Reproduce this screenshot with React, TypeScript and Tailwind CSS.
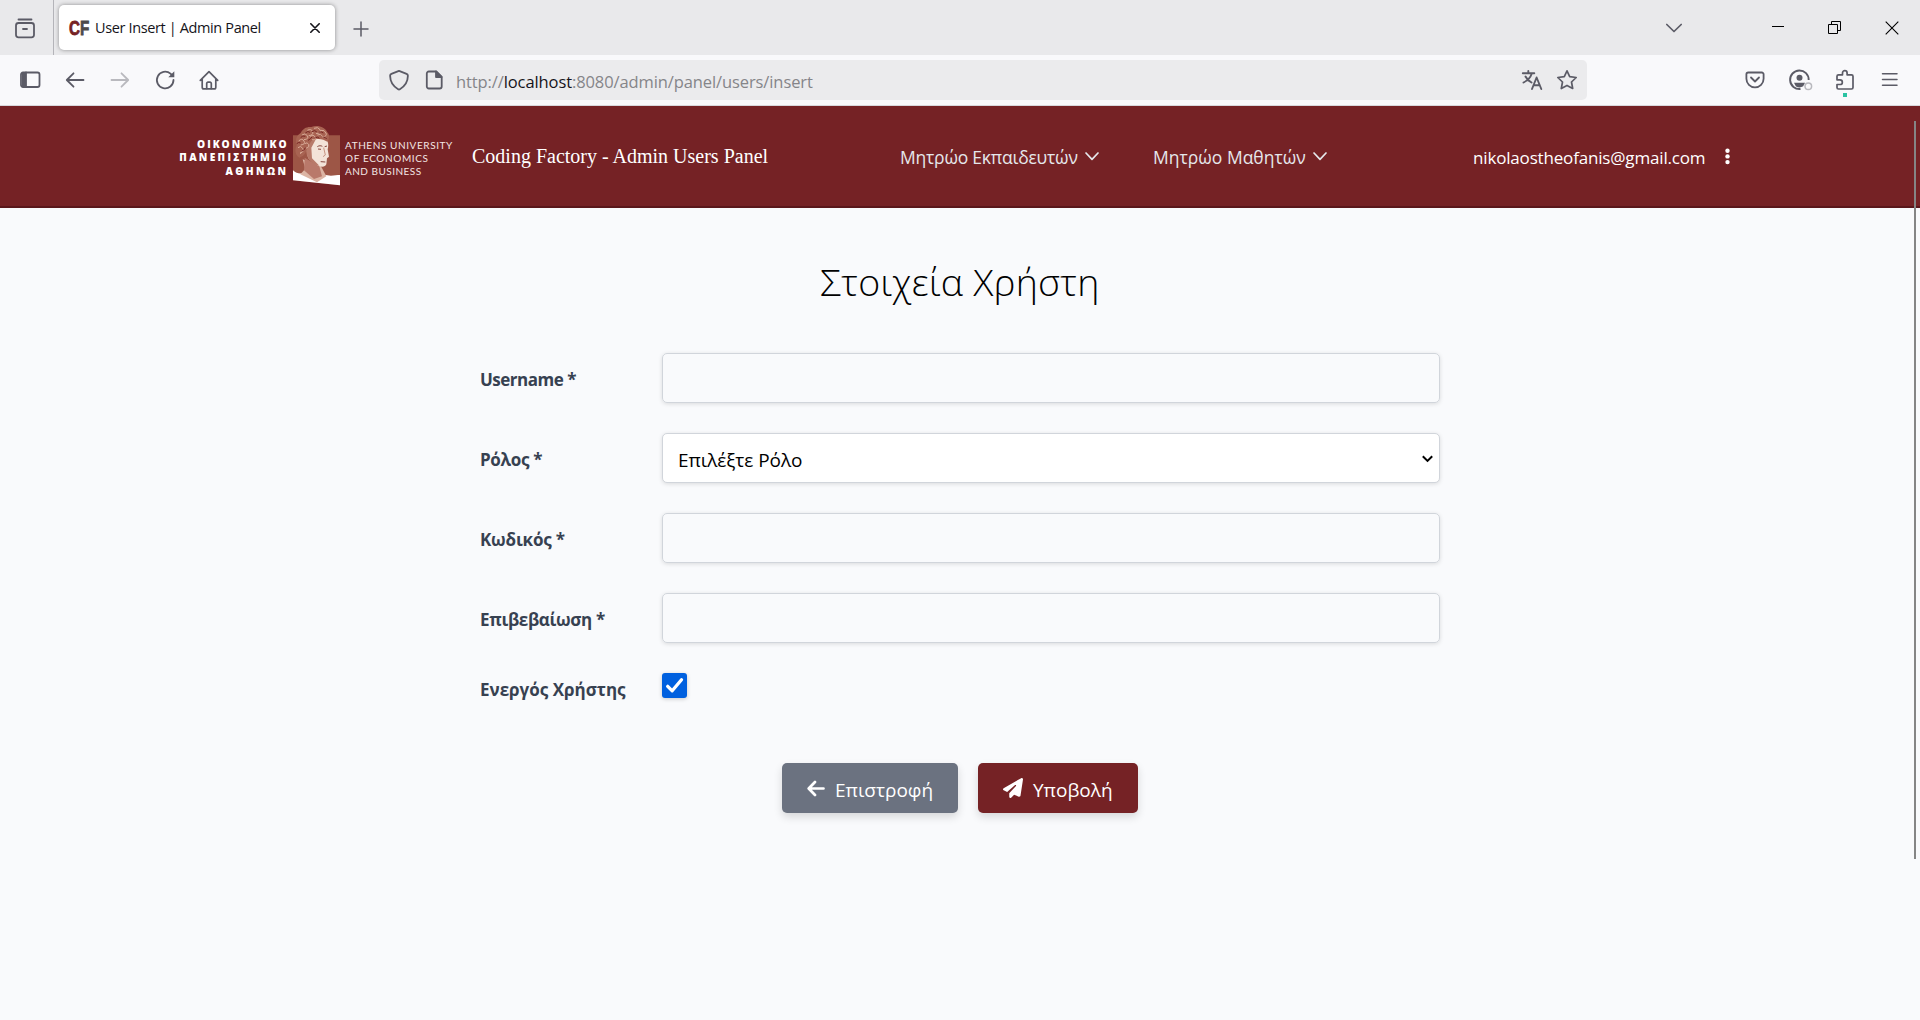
import type { ReactNode } from 'react';

function Icon({ size = 24, w = 1.6, children }: { size?: number; w?: number; children: ReactNode }) {
  return (
    <svg
      width={size}
      height={size}
      viewBox={`0 0 ${size} ${size}`}
      fill="none"
      stroke="currentColor"
      strokeWidth={w}
      strokeLinecap="round"
      strokeLinejoin="round"
      className="shrink-0"
    >
      {children}
    </svg>
  );
}

function Slot({ className, children }: { className: string; children: ReactNode }) {
  return <div className={`flex h-full shrink-0 items-center justify-center ${className}`}>{children}</div>;
}

function TabStrip() {
  return (
    <div className="flex h-[55px] items-center bg-[#e9e9eb] text-[#5b5b66]">
      <div className="flex h-full w-[54px] shrink-0 items-center border-r border-[#b4b4b9] pt-[2px] pl-[13px]">
        <Icon w={1.8}>
          <path d="M5.5 2.5h13" />
          <rect x="3" y="6" width="18" height="14.3" rx="2.5" />
          <path d="M10 12h4" />
        </Icon>
      </div>
      <div className="ml-[5px] flex h-[45px] w-[276px] shrink-0 items-center rounded-[5px] bg-white pl-[10px] shadow-[0_0_4px_rgba(0,0,0,0.4)]">
        <div className="flex h-5 w-[26px] shrink-0 items-center">
          <span className="origin-left scale-x-[0.76] font-['Liberation_Sans',sans-serif] text-[20px] leading-none font-bold text-[#752225] [-webkit-text-stroke:0.8px]">
            C<span className="text-[#4d4a4b]">F</span>
          </span>
        </div>
        <span className="w-[215px] pt-[1px] text-[14.5px] tracking-[-0.37px] whitespace-nowrap text-[#15141a]">
          User Insert | Admin Panel
        </span>
        <svg width="10" height="10" viewBox="0 0 10 10" stroke="#15141a" strokeWidth="1.6" strokeLinecap="round">
          <path d="M.8.8l8.4 8.4M9.2.8L.8 9.2" />
        </svg>
      </div>
      <Slot className="ml-[12px] w-[28px] pt-[2px]">
        <Icon size={18} w={1.5}>
          <path d="M9 2v14M2 9h14" />
        </Icon>
      </Slot>
      <div className="flex-1" />
      <Slot className="w-[75px]">
        <Icon w={1.7}>
          <path d="M4.8 8.5l7.2 7 7.2-7" />
        </Icon>
      </Slot>
      <div className="ml-[38px] flex h-full text-black">
        <Slot className="w-[57px]">
          <svg width="12" height="2" viewBox="0 0 12 2" fill="currentColor" className="mb-[1px]">
            <path d="M0 0h12v1H0z" />
          </svg>
        </Slot>
        <Slot className="w-[57px]">
          <svg width="13" height="13" viewBox="0 0 13 13" fill="none" stroke="currentColor">
            <path d="M.5 3.5h9v9h-9zM3.5 3.5v-3h9v9h-3" />
          </svg>
        </Slot>
        <Slot className="w-[57px]">
          <svg width="14" height="14" viewBox="0 0 14 14" fill="none" stroke="currentColor" strokeWidth="1.1">
            <path d="M.7.7l12.6 12.6M13.3.7L.7 13.3" />
          </svg>
        </Slot>
      </div>
    </div>
  );
}

function Toolbar() {
  return (
    <div className="flex h-[51px] items-center border-b border-[#d8d8dc] bg-[#f9f9fb] text-[#5b5b66]">
      <div className="ml-[7px] flex h-full w-[372px] shrink-0">
        <Slot className="w-[45px]">
          <Icon w={1.8}>
            <rect x="3" y="4.5" width="18.5" height="14.5" rx="2" />
            <path d="M4 5h4v13.5h-4z" fill="currentColor" stroke="none" />
            <path d="M8 4.5v14.5" />
          </Icon>
        </Slot>
        <Slot className="w-[45px]">
          <Icon w={1.8}>
            <path d="M20.5 12H4M10.5 5.3L3.8 12l6.7 6.7" />
          </Icon>
        </Slot>
        <Slot className="w-[45px] text-[#b9b9be]">
          <Icon w={1.8}>
            <path d="M3.5 12H20M13.5 5.3l6.7 6.7-6.7 6.7" />
          </Icon>
        </Slot>
        <Slot className="w-[45px]">
          <Icon w={1.8}>
            <path d="M20.5 12a8.3 8.3 0 1 1-3-6.400l1.500 1.600" />
            <path d="M21.300 3.300v6h-6z" fill="currentColor" stroke="none" />
          </Icon>
        </Slot>
        <Slot className="w-[44px]">
          <Icon w={1.7}>
            <path d="M3.3 12.3L12 3.6l8.7 8.7M5.2 10.8v8.4a1.7 1.7 0 0 0 1.7 1.7h10.2a1.7 1.7 0 0 0 1.7-1.7v-8.4" />
            <path d="M9.7 20.5v-5a1.3 1.3 0 0 1 1.3-1.3h2a1.3 1.3 0 0 1 1.3 1.3v5" />
          </Icon>
        </Slot>
      </div>
      <div className="flex h-10 w-[1208px] shrink-0 items-center rounded-[5px] bg-[#ebebed]">
        <Slot className="ml-[4px] w-[32px]">
          <Icon w={1.8}>
            <path d="M12 2.8l7.6 3.1c.9.4 1.3 1 1.3 1.900-.1 5.8-3.5 10.800-8 13.400a1.700 1.700 0 0 1-1.800 0c-4.500-2.600-7.900-7.600-8-13.400 0-.9.4-1.500 1.300-1.900z" />
          </Icon>
        </Slot>
        <Slot className="ml-[3px] w-[32px]">
          <Icon w={1.8}>
            <path d="M6.8 3.5h7.4l5.5 5.5v9.500a2 2 0 0 1-2 2H6.800a2 2 0 0 1-2-2v-13a2 2 0 0 1 2-2z" />
            <path d="M14 3.5v5.5h5.5z" fill="currentColor" />
          </Icon>
        </Slot>
        <span className="ml-[6px] flex-1 pt-[4px] text-[16.5px] tracking-[-0.1px] whitespace-nowrap text-[#858589]">
          http://<span className="text-[#15141a]">localhost</span>:8080/admin/panel/users/insert
        </span>
        <Slot className="w-[35px]">
          <Icon w={1.9}>
            <path d="M2.8 5.2h11.5M8.3 3v2M11.8 5.5c-1.300 4-4.500 7.200-8.300 9M5.500 8.500c1.300 2.700 3.300 4.500 6 6M12 21l4.600-11.500L21.300 21M13.500 17.300h6.300" />
          </Icon>
        </Slot>
        <Slot className="mr-[2px] w-[36px]">
          <Icon w={1.7}>
            <path d="M12 2.8l2.700 5.900 6.500.8-4.700 4.500 1.200 6.500L12 17.400l-5.700 3.100L7.500 14 2.800 9.500l6.500-.8z" />
          </Icon>
        </Slot>
      </div>
      <div className="ml-[145px] flex h-full">
        <Slot className="w-[46px]">
          <Icon w={1.8}>
            <path d="M5.2 4.5h13.600a1.800 1.800 0 0 1 1.800 1.800v4.500a8.600 8.600 0 0 1-17.200 0V6.300a1.800 1.800 0 0 1 1.800-1.800z" />
            <path d="M8 9.5l4 4 4-4" />
          </Icon>
        </Slot>
        <Slot className="w-[44px]">
          <svg width="26" height="24" viewBox="0 0 26 24" fill="none">
            <path d="M13.5 21a9.300 9.300 0 1 1 8.200-9" stroke="currentColor" strokeWidth="1.9" />
            <circle cx="12.5" cy="9.7" r="3" fill="currentColor" />
            <path d="M7 14.8h11l-1.800 3.500c-2 1.500-5.500 1.500-7.400 0z" fill="currentColor" />
            <circle cx="21.3" cy="18.3" r="3.3" stroke="#b9b9be" strokeWidth="1.5" />
          </svg>
        </Slot>
        <Slot className="relative w-[45px]">
          <Icon w={1.7}>
            <path d="M4 9V8.300a1.500 1.500 0 0 1 1.500-1.500h4V5a2.300 2.300 0 0 1 4.600 0v1.800h4.400A1.500 1.500 0 0 1 20 8.300v11.200a1.500 1.500 0 0 1-1.500 1.500h-13A1.500 1.500 0 0 1 4 19.500v-3h3a2.300 2.300 0 0 0 0-4.700H4z" />
          </Icon>
          <span className="absolute top-[38px] left-[21px] h-1 w-1 bg-[#2ac3a2]" />
        </Slot>
        <Slot className="w-[45px]">
          <Icon w={1.5}>
            <path d="M4.5 5.800h14.500M4.500 11.500h14.500M4.500 17.200h14.500" />
          </Icon>
        </Slot>
      </div>
    </div>
  );
}

function Portrait() {
  return (
    <svg width="47" height="61" viewBox="369 62 141 183" className="shrink-0">
      <path d="M369 93h141v150l-141-15z" fill="#9d5646" />
      <path d="M369 198c10 10 22 11 32 8l20-8 40 12c20 8 35 2 49 2v31l-141-15z" fill="#fff" />
      <path d="M398 165l8 28-15 17 50 24 28-18-16-30z" fill="#dcb5a4" />
      <path d="M404 160l-2 38 30 26 24-8-8-30z" fill="#b9796a" />
      <path d="M416 112c16-14 44-16 56-2 4 8 3 18 1 25l4 22-6 5-2 18c-3 8-14 9-24 4l-28-20c-8-14-9-38-1-52z" fill="#f3e3d8" />
      <path d="M408 112c8-8 18-10 30-8l-14 26 2 32 22 22c-16-2-32-14-38-34z" fill="#b87a69" />
      <path d="M442 127c6-4 11-3 15-1M464 127l7-2M452 172l14 1M444 134l9 1" stroke="#86453c" strokeWidth="3" fill="none" />
      <path d="M461 130l5 22-7 5" stroke="#c89583" strokeWidth="3" fill="none" />
      <path
        d="M388 160c-14-8-14-28-8-36-6-16 0-32 12-38 6-14 20-20 32-18 18-8 42 0 48 16 8 8 6 20 0 28-12-8-28-12-44-4-10 6-10 18-18 26-2 12-8 22-22 26z"
        fill="#a86352"
      />
      <path
        d="M384 130q8-8 14 2t-8 14M386 110q10-10 16 0t-10 12M396 92q10-8 16 2t-10 12M412 78q12-6 16 4t-12 12M432 72q12-6 18 4t-12 12M452 78q12-2 16 8t-10 12M420 96q10-8 16 2t-10 8M442 92q10-6 16 4M404 118q8-6 12 2t-8 12M390 148q8-4 12-12"
        stroke="#d9ab98"
        strokeWidth="3"
        fill="none"
      />
      <path
        d="M380 118q6-6 12-2M392 100q6-8 14-4M406 86q8-8 14-2M426 82q8-6 14 0M446 84q8-4 14 2M414 108q8-4 12-10M436 100q8-4 12 2M396 140q8-2 10-10M460 98q6 0 10 6"
        stroke="#762522"
        strokeWidth="3"
        fill="none"
      />
    </svg>
  );
}

function Logo() {
  return (
    <div className="flex w-[276px] shrink-0 items-center">
      <div className="flex w-[108px] flex-col items-end pt-[4px] text-[10.2px] leading-[13.6px] font-extrabold whitespace-nowrap text-white">
        <span className="-mr-[0.5px] tracking-[1.95px]">ΟΙΚΟΝΟΜΙΚΟ</span>
        <span className="-mr-[0.5px] tracking-[2.3px]">ΠΑΝΕΠΙΣΤΗΜΙΟ</span>
        <span className="-mr-[0.5px] tracking-[2.45px]">ΑΘΗΝΩΝ</span>
      </div>
      <div className="mr-[5px] mb-[2px] ml-[5px]">
        <Portrait />
      </div>
      <div className="flex flex-col pt-[5px] font-['Lato',sans-serif] text-[10px] leading-[13.2px] whitespace-nowrap text-[#f3e6e4]">
        <span className="tracking-[0.58px]">ATHENS UNIVERSITY</span>
        <span className="tracking-[0.64px]">OF ECONOMICS</span>
        <span className="tracking-[0.48px]">AND BUSINESS</span>
      </div>
    </div>
  );
}

function NavChevron() {
  return (
    <svg
      width="14"
      height="9"
      viewBox="0 0 14 9"
      fill="none"
      stroke="currentColor"
      strokeWidth="1.7"
      strokeLinecap="round"
      strokeLinejoin="round"
      className="mb-[2px] shrink-0"
    >
      <path d="M1 1l6 6.3L13 1" />
    </svg>
  );
}

function Navbar() {
  return (
    <nav className="flex h-[102px] items-center border-b-2 border-[#5a171b] bg-[#752225] pl-[180px] text-white">
      <Logo />
      <span className="ml-[16px] w-[428px] shrink-0 pb-[1px] font-['Liberation_Serif',serif] text-[20px] whitespace-nowrap">
        Coding Factory - Admin Users Panel
      </span>
      <div className="flex w-[253px] shrink-0 items-center pt-[2px] text-[17.5px] text-[#e5e7eb]">
        <span className="w-[185px] tracking-[-0.22px] whitespace-nowrap">Μητρώο Εκπαιδευτών</span>
        <NavChevron />
      </div>
      <div className="flex w-[320px] shrink-0 items-center pt-[2px] text-[17.5px] text-[#e5e7eb]">
        <span className="w-[160px] whitespace-nowrap">Μητρώο Μαθητών</span>
        <NavChevron />
      </div>
      <span className="w-[252px] shrink-0 pt-[3px] text-[17px] tracking-[-0.17px] whitespace-nowrap">
        nikolaostheofanis@gmail.com
      </span>
      <svg width="5" height="17" viewBox="0 0 5 17" fill="currentColor" className="shrink-0">
        <circle cx="2.5" cy="2.7" r="2.2" />
        <circle cx="2.5" cy="8.4" r="2.2" />
        <circle cx="2.5" cy="14.1" r="2.2" />
      </svg>
    </nav>
  );
}

const FIELD = 'h-[50px] flex-1 rounded-[5px] border border-[#d1d5db] shadow-[0_1px_4px_rgba(0,0,0,0.13)]';

function Row({ label, tracking, children }: { label: string; tracking: string; children: ReactNode }) {
  return (
    <div className="flex items-center">
      <label
        className={`w-[182px] shrink-0 pt-[3px] text-[17px] font-bold whitespace-nowrap text-[#374151] ${tracking}`}
      >
        {label}
      </label>
      {children}
    </div>
  );
}

function UserForm() {
  return (
    <form className="mx-auto flex w-[960px] flex-col">
      <div className="flex flex-col gap-[30px]">
        <Row label="Username *" tracking="tracking-[-0.5px]">
          <div className={FIELD} />
        </Row>
        <Row label="Ρόλος *" tracking="tracking-[-0.3px]">
          <div className={`${FIELD} flex items-center justify-between bg-white pr-[6px] pl-[15px]`}>
            <span className="pt-[4px] text-[19px] tracking-[-0.05px] text-black">Επιλέξτε Ρόλο</span>
            <svg width="11" height="8" viewBox="0 0 11 8" fill="none" stroke="#000" strokeWidth="2" className="mt-[2px]">
              <path d="M.8 1.2l4.7 4.7 4.7-4.7" />
            </svg>
          </div>
        </Row>
        <Row label="Κωδικός *" tracking="tracking-[-0.2px]">
          <div className={FIELD} />
        </Row>
        <Row label="Επιβεβαίωση *" tracking="tracking-[-0.35px]">
          <div className={FIELD} />
        </Row>
        <div className="flex h-[25px] items-start">
          <label className="w-[182px] shrink-0 pt-[4px] text-[17px] leading-[25px] font-bold tracking-[0px] whitespace-nowrap text-[#374151]">
            Ενεργός Χρήστης
          </label>
          <div className="flex h-[25px] w-[25px] items-center justify-center rounded-[3px] bg-[#0060df] shadow-[0_1px_4px_rgba(0,0,0,0.2)]">
            <svg
              width="19"
              height="17"
              viewBox="0 0 19 17"
              fill="none"
              stroke="#fff"
              strokeWidth="3.3"
              strokeLinecap="round"
              strokeLinejoin="round"
            >
              <path d="M2.7 9.3l4.500 4.500L16.500 2.800" />
            </svg>
          </div>
        </div>
      </div>
      <div className="mt-[65px] flex justify-center gap-[20px] text-[19px] text-white">
        <button
          type="button"
          className="flex h-[50px] w-[176px] items-center rounded-[5px] bg-[#6b7280] pl-[25px] shadow-[0_4px_8px_rgba(0,0,0,0.14)]"
        >
          <svg
            width="18"
            height="17"
            viewBox="0 0 18 17"
            fill="none"
            stroke="currentColor"
            strokeWidth="2.7"
            strokeLinecap="round"
            strokeLinejoin="round"
            className="mr-[10px]"
          >
            <path d="M16.5 8.5H2M8 2L1.7 8.5 8 15" />
          </svg>
          <span className="pt-[4px]">Επιστροφή</span>
        </button>
        <button
          type="button"
          className="flex h-[50px] w-[160px] items-center rounded-[5px] bg-[#752225] pl-[25px] shadow-[0_4px_8px_rgba(0,0,0,0.14)]"
        >
          <svg width="20" height="20" viewBox="0 0 512 512" fill="currentColor" className="mr-[10px]">
            <path d="M498.1 5.6c10.1 7 15.4 19.1 13.5 31.2l-64 416c-1.5 9.7-7.4 18.2-16 23s-18.9 5.4-28 1.6L284 427.7l-68.500 74.100c-8.900 9.700-22.900 12.900-35.200 8.100S160 493.200 160 480v-83.600c0-4 1.500-7.800 4.200-10.800l167.600-182.800c5.800-6.300 5.600-16-.4-22s-15.700-6.400-22-.7L106 360.800l-88.300-44.200C7.100 311.300.3 300.700 0 288.900s5.900-22.800 16.100-28.700l448-256c10.700-6.100 23.900-5.500 34 1.400z" />
          </svg>
          <span className="pt-[4px]">Υποβολή</span>
        </button>
      </div>
    </form>
  );
}

export default function App() {
  return (
    <div className="relative flex h-[1020px] w-[1920px] flex-col overflow-hidden bg-[#f9fafc] font-['Open_Sans','Noto_Sans',sans-serif]">
      <TabStrip />
      <Toolbar />
      <Navbar />
      <main className="flex flex-col">
        <h1 className="mt-[49px] mb-[46px] text-center text-[37.5px] leading-[50px] font-light tracking-[0.25px] text-black">
          Στοιχεία Χρήστη
        </h1>
        <UserForm />
      </main>
      <div className="absolute top-[121px] left-[1914px] h-[738px] w-[2px] bg-[#858585]" />
    </div>
  );
}
